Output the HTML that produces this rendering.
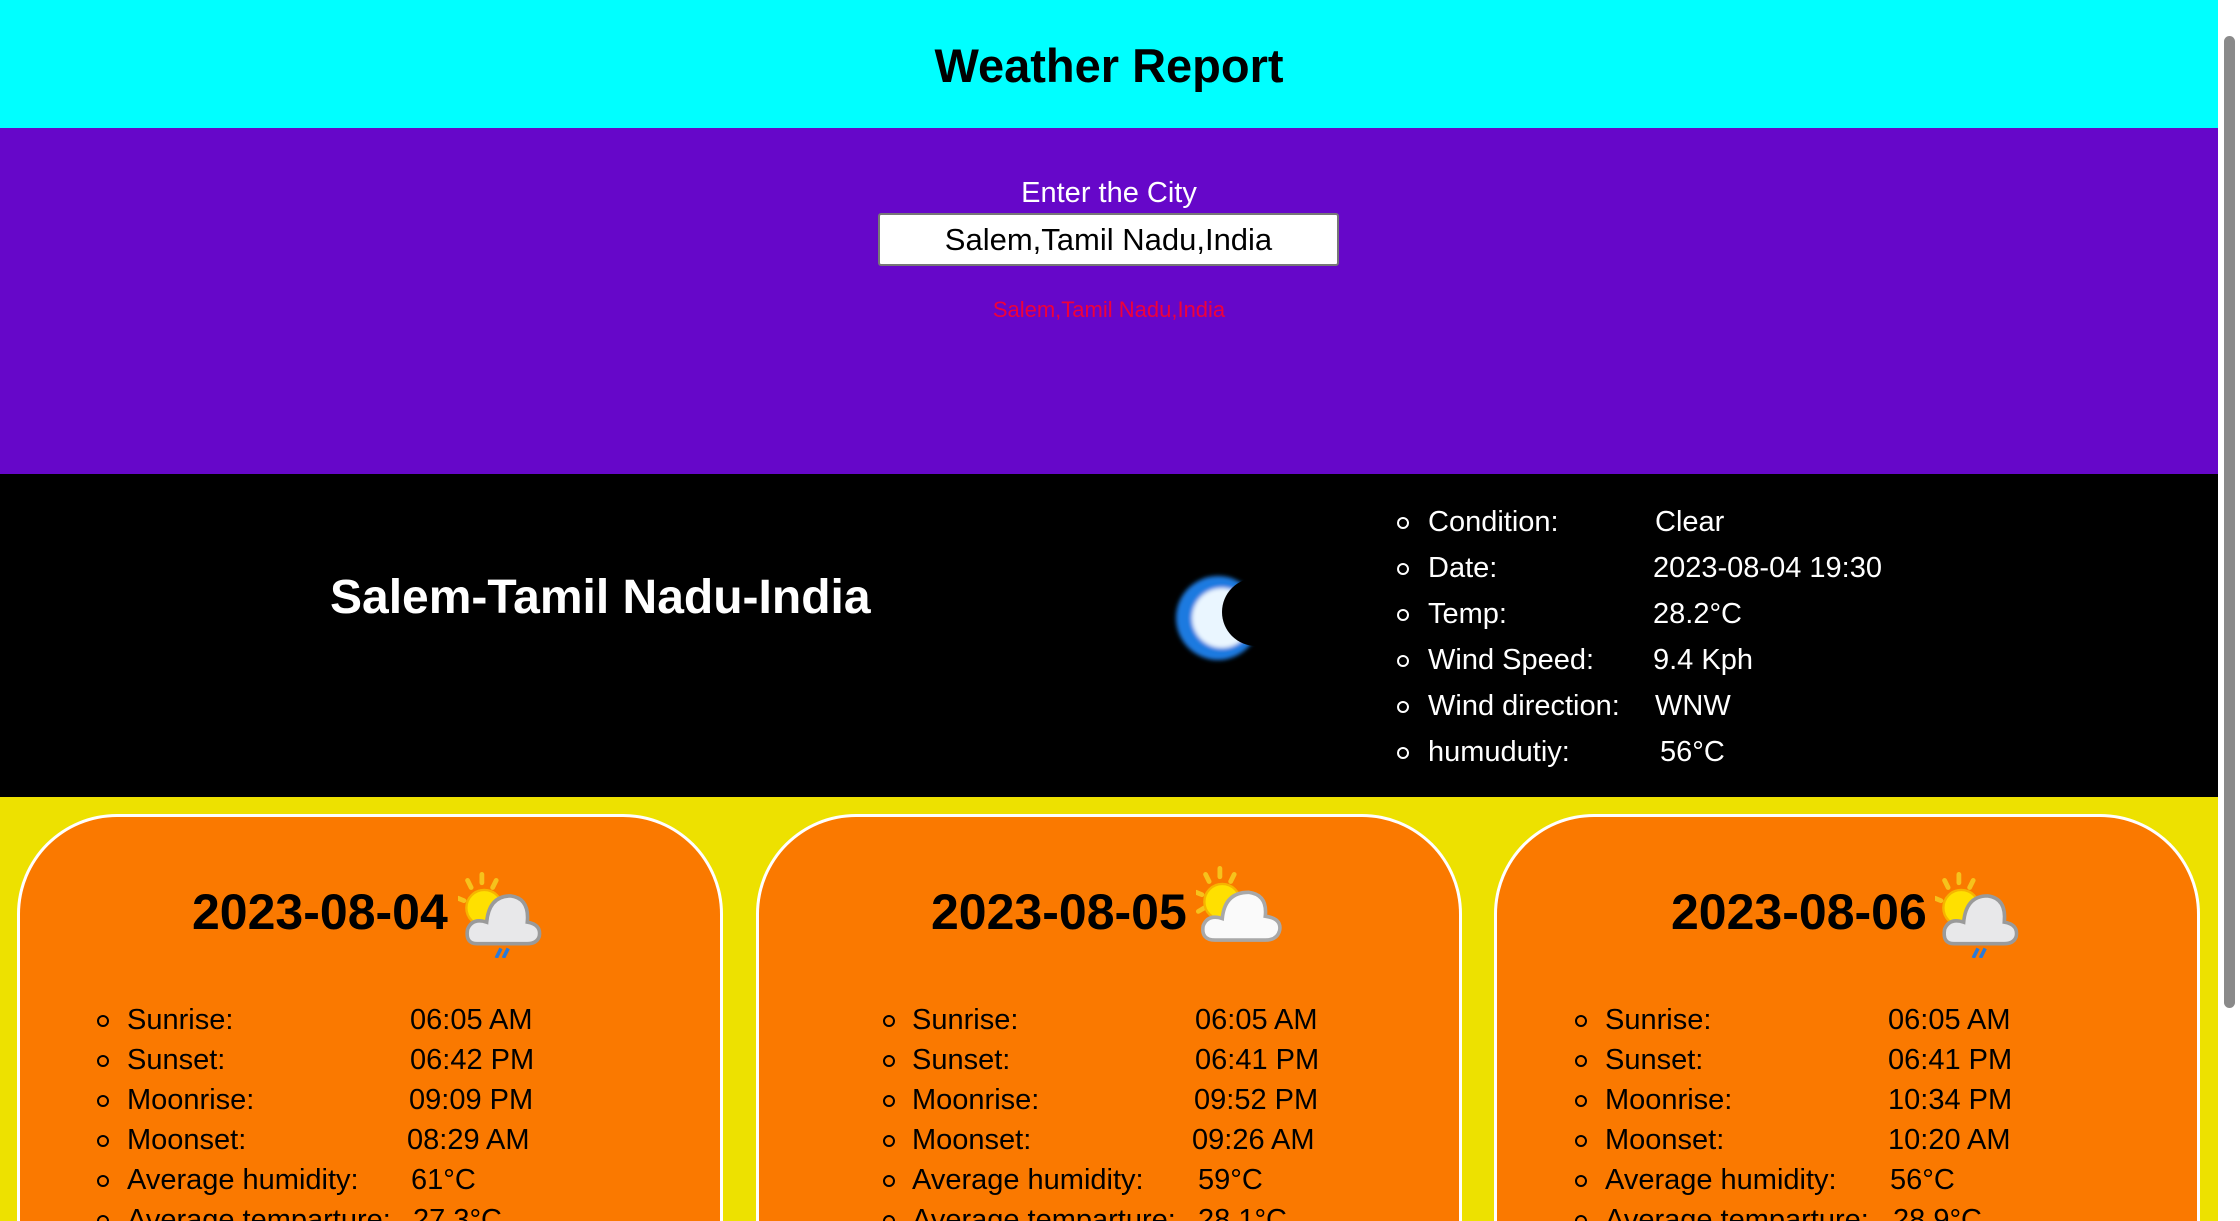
<!DOCTYPE html>
<html><head><meta charset="utf-8"><style>
*{margin:0;padding:0;box-sizing:border-box}
html,body{width:2240px;height:1221px;overflow:hidden;background:#ede100;font-family:"Liberation Sans",sans-serif}
#wrap{position:relative;width:2240px;height:1221px;overflow:hidden}
.a{position:absolute;white-space:nowrap}
#hdr{position:absolute;left:0;top:0;width:2218px;height:128px;background:#00ffff}
#pur{position:absolute;left:0;top:128px;width:2218px;height:346px;background:#6607c9}
#blk{position:absolute;left:0;top:474px;width:2218px;height:323px;background:#000}
#sb{position:absolute;left:2218px;top:0;width:22px;height:1221px;background:#fff}
#thumb{position:absolute;left:2224px;top:36px;width:11px;height:972px;background:#8a8a8a;border-radius:6px}
.card{position:absolute;top:814px;width:706px;height:407px;background:#fa7900;border:3px solid #fff;border-bottom:none;border-radius:100px 100px 0 0}
.row{position:absolute;font-size:29px;color:#000;white-space:nowrap}
.bul{position:absolute;width:12px;height:12px;border:2px solid currentColor;border-radius:50%}
.h{position:absolute;font-size:50px;font-weight:bold;white-space:nowrap}
</style></head><body><div id="wrap">
<div id="hdr"></div>
<div class="a" style="left:0;width:2218px;text-align:center;top:38px;font-size:47px;font-weight:bold;color:#000">Weather Report</div>
<div id="pur"></div>
<div class="a" style="left:0;width:2218px;text-align:center;top:177px;font-size:29px;color:#fff">Enter the City</div>
<div class="a" style="left:878px;top:213px;width:461px;height:53px;background:#fff;border:2px solid #777;border-radius:3px;text-align:center;font-size:31px;line-height:49px;color:#000">Salem,Tamil Nadu,India</div>
<div class="a" style="left:0;width:2218px;text-align:center;top:297px;font-size:22px;color:#f0003a">Salem,Tamil Nadu,India</div>
<div id="blk"></div>
<div class="a" style="left:330px;top:570px;font-size:48px;font-weight:bold;color:#fff">Salem-Tamil Nadu-India</div>
<svg class="a" style="left:1170px;top:566px" width="96" height="102" viewBox="0 0 96 102">
<defs>
<mask id="m1"><rect width="96" height="102" fill="#fff"/><circle cx="86" cy="46" r="34" fill="#000"/></mask>
<filter id="bl"><feGaussianBlur stdDeviation="2"/></filter>
</defs>
<g filter="url(#bl)" mask="url(#m1)">
<circle cx="48" cy="52" r="42" fill="#1f7ae0"/>
<circle cx="52" cy="52" r="30" fill="#eaf6ff"/>
</g>
</svg>
<div>
<div class="bul" style="color:#fff;left:1397px;top:517px"></div><div class="row" style="color:#fff;left:1428px;top:506px">Condition:</div><div class="row" style="color:#fff;left:1655px;top:506px">Clear</div>
<div class="bul" style="color:#fff;left:1397px;top:563px"></div><div class="row" style="color:#fff;left:1428px;top:552px">Date:</div><div class="row" style="color:#fff;left:1653px;top:552px">2023-08-04 19:30</div>
<div class="bul" style="color:#fff;left:1397px;top:609px"></div><div class="row" style="color:#fff;left:1428px;top:598px">Temp:</div><div class="row" style="color:#fff;left:1653px;top:598px">28.2°C</div>
<div class="bul" style="color:#fff;left:1397px;top:655px"></div><div class="row" style="color:#fff;left:1428px;top:644px">Wind Speed:</div><div class="row" style="color:#fff;left:1653px;top:644px">9.4 Kph</div>
<div class="bul" style="color:#fff;left:1397px;top:701px"></div><div class="row" style="color:#fff;left:1428px;top:690px">Wind direction:</div><div class="row" style="color:#fff;left:1655px;top:690px">WNW</div>
<div class="bul" style="color:#fff;left:1397px;top:747px"></div><div class="row" style="color:#fff;left:1428px;top:736px">humudutiy:</div><div class="row" style="color:#fff;left:1660px;top:736px">56°C</div>
</div>

<div class="card" style="left:17px"></div>
<div class="card" style="left:756px"></div>
<div class="card" style="left:1494px"></div>

<div class="h" style="left:192px;top:883px">2023-08-04</div>
<div class="h" style="left:931px;top:883px">2023-08-05</div>
<div class="h" style="left:1671px;top:883px">2023-08-06</div>

<svg class="a" style="left:458px;top:872px" width="86" height="86" viewBox="4 2 72 72">
<g stroke="#f6c21c" stroke-width="4" stroke-linecap="round"><line x1="24" y1="4" x2="24" y2="11"/><line x1="12" y1="9" x2="15" y2="15"/><line x1="36" y1="9" x2="33" y2="15"/><line x1="4" y1="24" x2="9" y2="26"/></g>
<circle cx="26" cy="32" r="15" fill="#ffe000" stroke="#f6b400" stroke-width="2"/>
<path d="M20 62 Q10 62 12 50 Q16 40 28 44 Q30 22 48 22 Q64 24 62 44 Q74 46 72 56 Q70 62 62 62 Z" fill="#e8e8ea" stroke="#9a9a9a" stroke-width="3"/>
<g stroke="#2a7ad8" stroke-width="3"><line x1="40" y1="66" x2="36" y2="74"/><line x1="46" y1="66" x2="42" y2="74"/></g>
</svg>
<svg class="a" style="left:1196px;top:866px" width="86" height="86" viewBox="4 2 72 72">
<g stroke="#f6c21c" stroke-width="4" stroke-linecap="round"><line x1="24" y1="4" x2="24" y2="11"/><line x1="12" y1="9" x2="15" y2="15"/><line x1="36" y1="9" x2="33" y2="15"/><line x1="4" y1="24" x2="9" y2="26"/><line x1="6" y1="40" x2="11" y2="37"/></g>
<circle cx="26" cy="32" r="15" fill="#ffe000" stroke="#f6b400" stroke-width="2"/>
<path d="M20 64 Q8 64 10 52 Q14 42 26 46 Q28 24 48 24 Q64 26 62 44 Q76 46 74 56 Q72 64 62 64 Z" fill="#fafafa" stroke="#a8a8a8" stroke-width="3"/>
</svg>
<svg class="a" style="left:1935px;top:872px" width="86" height="86" viewBox="4 2 72 72">
<g stroke="#f6c21c" stroke-width="4" stroke-linecap="round"><line x1="24" y1="4" x2="24" y2="11"/><line x1="12" y1="9" x2="15" y2="15"/><line x1="36" y1="9" x2="33" y2="15"/><line x1="4" y1="24" x2="9" y2="26"/></g>
<circle cx="26" cy="32" r="15" fill="#ffe000" stroke="#f6b400" stroke-width="2"/>
<path d="M20 62 Q10 62 12 50 Q16 40 28 44 Q30 22 48 22 Q64 24 62 44 Q74 46 72 56 Q70 62 62 62 Z" fill="#e8e8ea" stroke="#9a9a9a" stroke-width="3"/>
<g stroke="#2a7ad8" stroke-width="3"><line x1="40" y1="66" x2="36" y2="74"/><line x1="46" y1="66" x2="42" y2="74"/></g>
</svg>

<!-- card 1 -->
<div class="bul" style="left:97px;top:1015px"></div><div class="row" style="left:127px;top:1004px">Sunrise:</div><div class="row" style="left:410px;top:1004px">06:05 AM</div>
<div class="bul" style="left:97px;top:1055px"></div><div class="row" style="left:127px;top:1044px">Sunset:</div><div class="row" style="left:410px;top:1044px">06:42 PM</div>
<div class="bul" style="left:97px;top:1095px"></div><div class="row" style="left:127px;top:1084px">Moonrise:</div><div class="row" style="left:409px;top:1084px">09:09 PM</div>
<div class="bul" style="left:97px;top:1135px"></div><div class="row" style="left:127px;top:1124px">Moonset:</div><div class="row" style="left:407px;top:1124px">08:29 AM</div>
<div class="bul" style="left:97px;top:1175px"></div><div class="row" style="left:127px;top:1164px">Average humidity:</div><div class="row" style="left:411px;top:1164px">61°C</div>
<div class="bul" style="left:97px;top:1215px"></div><div class="row" style="left:127px;top:1204px">Average temparture:</div><div class="row" style="left:413px;top:1204px">27.3°C</div>
<!-- card 2 -->
<div class="bul" style="left:883px;top:1015px"></div><div class="row" style="left:912px;top:1004px">Sunrise:</div><div class="row" style="left:1195px;top:1004px">06:05 AM</div>
<div class="bul" style="left:883px;top:1055px"></div><div class="row" style="left:912px;top:1044px">Sunset:</div><div class="row" style="left:1195px;top:1044px">06:41 PM</div>
<div class="bul" style="left:883px;top:1095px"></div><div class="row" style="left:912px;top:1084px">Moonrise:</div><div class="row" style="left:1194px;top:1084px">09:52 PM</div>
<div class="bul" style="left:883px;top:1135px"></div><div class="row" style="left:912px;top:1124px">Moonset:</div><div class="row" style="left:1192px;top:1124px">09:26 AM</div>
<div class="bul" style="left:883px;top:1175px"></div><div class="row" style="left:912px;top:1164px">Average humidity:</div><div class="row" style="left:1198px;top:1164px">59°C</div>
<div class="bul" style="left:883px;top:1215px"></div><div class="row" style="left:912px;top:1204px">Average temparture:</div><div class="row" style="left:1198px;top:1204px">28.1°C</div>
<!-- card 3 -->
<div class="bul" style="left:1575px;top:1015px"></div><div class="row" style="left:1605px;top:1004px">Sunrise:</div><div class="row" style="left:1888px;top:1004px">06:05 AM</div>
<div class="bul" style="left:1575px;top:1055px"></div><div class="row" style="left:1605px;top:1044px">Sunset:</div><div class="row" style="left:1888px;top:1044px">06:41 PM</div>
<div class="bul" style="left:1575px;top:1095px"></div><div class="row" style="left:1605px;top:1084px">Moonrise:</div><div class="row" style="left:1888px;top:1084px">10:34 PM</div>
<div class="bul" style="left:1575px;top:1135px"></div><div class="row" style="left:1605px;top:1124px">Moonset:</div><div class="row" style="left:1888px;top:1124px">10:20 AM</div>
<div class="bul" style="left:1575px;top:1175px"></div><div class="row" style="left:1605px;top:1164px">Average humidity:</div><div class="row" style="left:1890px;top:1164px">56°C</div>
<div class="bul" style="left:1575px;top:1215px"></div><div class="row" style="left:1605px;top:1204px">Average temparture:</div><div class="row" style="left:1893px;top:1204px">28.9°C</div>

<div id="sb"></div><div id="thumb"></div>
</div></body></html>
